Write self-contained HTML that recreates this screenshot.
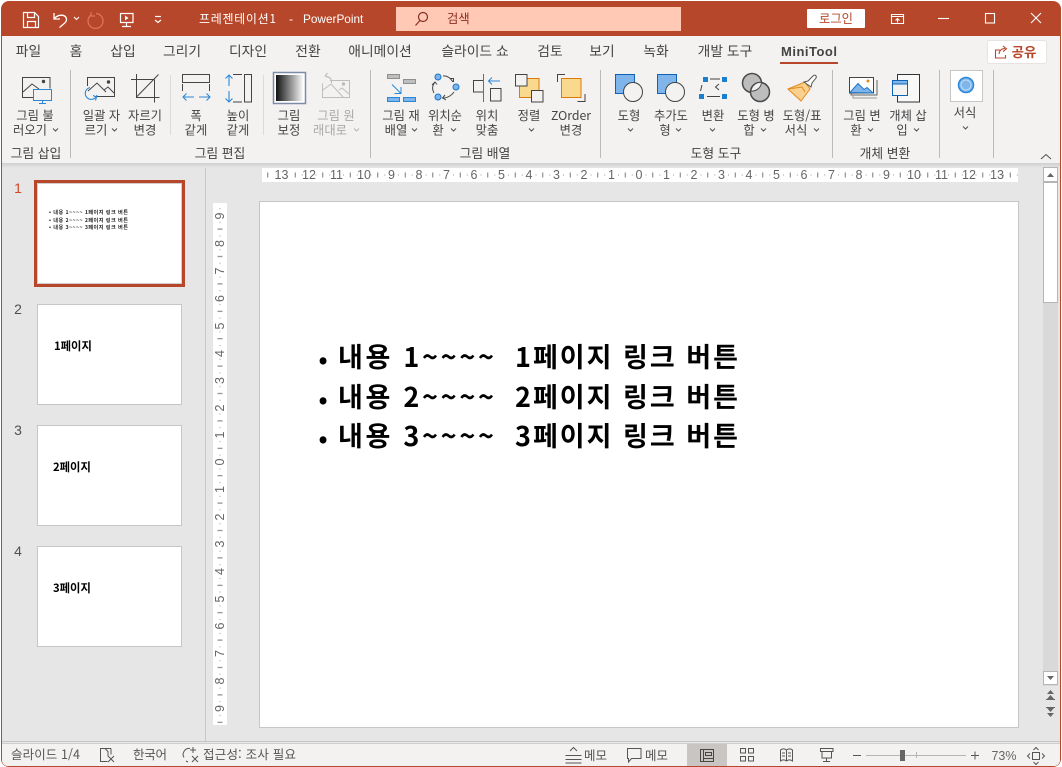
<!DOCTYPE html>
<html lang="ko"><head><meta charset="utf-8"><title>PowerPoint</title>
<style>
html,body{margin:0;padding:0;background:#fff;width:1062px;height:767px;overflow:hidden}
svg{display:block}
text{font-family:"Liberation Sans","Noto Sans CJK KR",sans-serif;font-size:12.3px;fill:#444}
.c{text-anchor:middle}
.k{font-family:"Noto Sans CJK KR","Liberation Sans",sans-serif}
.k text{font-family:"Noto Sans CJK KR","Liberation Sans",sans-serif}
.g{fill:#a8a8a8}
.w{fill:#fff}
.tab{font-size:13.8px;text-anchor:middle;fill:#444}
.r{font-size:12.5px;fill:#666;text-anchor:middle}
.m{font-size:27px;font-weight:700;fill:#000}
.t{font-size:11.3px;font-weight:700;fill:#000}
.s{font-size:5.2px;font-weight:700;fill:#222}
.st{font-size:12.5px;fill:#555}
.gl{font-size:12.8px}
</style></head><body>
<svg width="1062" height="767" viewBox="0 0 1062 767" xmlns="http://www.w3.org/2000/svg">
<defs>
<linearGradient id="gr" x1="0" x2="1" y1="0" y2="0"><stop offset="0" stop-color="#111"/><stop offset="1" stop-color="#fafafa"/></linearGradient>
<linearGradient id="sh" x1="0" x2="0" y1="0" y2="1"><stop offset="0" stop-color="#cfcfcf"/><stop offset="1" stop-color="#e6e6e6"/></linearGradient>
<pattern id="hr" patternUnits="userSpaceOnUse" x="639" y="168" width="27.5" height="14">
<rect x="13.25" y="4.5" width="1" height="5" fill="#777"/><rect x="6.5" y="6.5" width="1" height="1" fill="#999"/><rect x="20.25" y="6.5" width="1" height="1" fill="#999"/>
</pattern>
<pattern id="vr" patternUnits="userSpaceOnUse" x="213" y="462" width="14" height="27.4">
<rect x="4.5" y="13.2" width="5" height="1" fill="#777"/><rect x="6.5" y="6.4" width="1" height="1" fill="#999"/><rect x="6.5" y="20" width="1" height="1" fill="#999"/>
</pattern>
</defs>

<!-- window -->
<rect x="1" y="1" width="1060" height="766" rx="8" fill="#B7472A"/>
<rect x="2" y="36" width="1058" height="730" rx="6" fill="#E6E6E6"/>
<rect x="2" y="36" width="1058" height="127" fill="#F3F2F1"/>
<rect x="2" y="163" width="1058" height="5" fill="url(#sh)"/>

<!-- quick access -->
<g fill="none" stroke="#fff" stroke-width="1.2">
<path d="M23.5 12.5h11l4 4v11h-15z"/><path d="M27.5 12.5v5h7v-5M27.5 27.5v-6h8v6"/>
<path d="M54 13v6h6M54.5 18.5c3-4 11-5 12 0.500 .5 3-3 5-7 8.500" stroke-width="1.3"/>
<path d="M74 17l2.500 2.500 2.500-2.500" stroke-width="1.100"/>
<path d="M96 13.500a7.500 7.500 0 1 1-5 1.500" stroke="#E0735A" stroke-width="1.300"/><path d="M91 12v4h4" stroke="#E0735A"/>
<path d="M120.500 13.500h12.500v9h-12.500zM126.500 22.500v4M122 26.500h9"/>
<path d="M155 16.500h6" /><path d="M155 20l3 2.500 3-2.500"/>
</g>
<path d="M125 15.500l3.500 2.500-3.500 2.500z" fill="#fff"/>
<text class="w k" x="199" y="23" textLength="77" style="font-size:12px">프레젠테이션1</text>
<text class="w" x="289" y="23">-</text>
<text class="w" x="303" y="23" style="font-size:11.800px">PowerPoint</text>

<!-- search -->
<rect x="396" y="7" width="285" height="24" fill="#FFC9B5"/>
<g fill="none" stroke="#8a2e1e" stroke-width="1.200"><circle cx="423" cy="17" r="4.500"/><path d="M420 20.500l-4.500 5"/></g>
<text class="k" x="447" y="23" style="fill:#8a2e1e">검색</text>

<!-- login / controls -->
<rect x="807" y="9" width="58" height="19" rx="1" fill="#fff"/>
<text class="c k" x="836" y="23" style="fill:#B7472A">로그인</text>
<g fill="none" stroke="#fff" stroke-width="1.100">
<path d="M891.500 14.500h12v9h-12zM891.500 16.500h12M897.500 22.500v-4M895.500 20.500l2-2 2 2"/>
<path d="M938 18.500h11"/><rect x="985.500" y="13.500" width="9" height="9.500"/><path d="M1031 13l10 10M1041 13l-10 10"/>
</g>

<!-- tabs -->
<g class="k">
<text class="tab" x="28.500" y="56">파일</text><text class="tab" x="76" y="56">홈</text><text class="tab" x="123" y="56">삽입</text>
<text class="tab" x="182" y="56">그리기</text><text class="tab" x="248" y="56">디자인</text><text class="tab" x="308" y="56">전환</text>
<text class="tab" x="380" y="56">애니메이션</text><text class="tab" x="475" y="56">슬라이드 쇼</text><text class="tab" x="550" y="56">검토</text>
<text class="tab" x="602" y="56">보기</text><text class="tab" x="656" y="56">녹화</text><text class="tab" x="725" y="56">개발 도구</text>
</g>
<text class="tab" x="809" y="56" textLength="56" style="font-weight:700;fill:#444;font-size:13px">MiniTool</text>
<rect x="780" y="62" width="58" height="2" fill="#B7472A"/>
<rect x="987.500" y="40.500" width="59" height="23" rx="2" fill="#fff" stroke="#E6E4E2"/>
<g fill="none" stroke="#B7472A" stroke-width="1.100"><path d="M1000 50h-4.500v8h10v-3"/><path d="M999 54c.5-4 3-5.500 6-5.500M1003 46l3.500 2.800-3.500 2.800"/></g>
<text class="c k" x="1024" y="57" style="font-weight:700;fill:#B7472A;font-size:13.500px">공유</text>

<!-- ribbon separators -->
<g fill="#BDBBB9">
<rect x="70" y="70" width="1" height="88"/><rect x="370" y="70" width="1" height="88"/><rect x="600" y="70" width="1" height="88"/>
<rect x="832" y="70" width="1" height="88"/><rect x="939" y="70" width="1" height="88"/><rect x="993" y="70" width="1" height="88"/>
</g>
<g fill="#DDDBD9"><rect x="170" y="75" width="1" height="60"/><rect x="263" y="75" width="1" height="60"/></g>

<!-- ribbon icons: group 1 -->
<g fill="none" stroke="#444" stroke-width="1">
<path d="M33 97.500h-10.500v-20h27.500v11"/><path d="M23 92l9-8 7 5"/><circle cx="43.500" cy="81.500" r="1.200" fill="#444"/>
</g>
<g fill="none" stroke="#2B88D8" stroke-width="1"><rect x="33.500" y="89.500" width="18" height="11"/><path d="M42.500 100.500v3M39 103.500h7"/></g>
<g fill="none" stroke="#444" stroke-width="1">
<path d="M87.500 86v-8.500h27v19h-20"/><path d="M88 91l9-8 9 9M104 90l4-3 6 6"/><circle cx="108.500" cy="82" r="1.200" fill="#444"/>
<path d="M131 79.500h23.500M136.500 74v23.500h23M154.500 79.500v23M136.500 97l22-22.500"/>
<rect x="182.500" y="74.500" width="27" height="8"/><path d="M182.500 84v7M209.500 84v7"/>
<rect x="244.500" y="74.500" width="7" height="27.500"/><path d="M233 74.500h9M233 102h9"/>
</g>
<g fill="none" stroke="#2B88D8" stroke-width="1.100">
<path d="M90 87.500a6 6 0 1 0 7 7.500"/><path d="M93 100.500l3.500 1.500-1 3.500" transform="translate(0 -5)"/>
<path d="M183 97h11M186.500 93.500l-3.500 3.500 3.500 3.500M199 97h11M206.500 93.500l3.500 3.500-3.500 3.500"/>
<path d="M229 75v11M225.500 78.500l3.500-3.500 3.500 3.500M229 91v11M225.500 98.500l3.500 3.500 3.500-3.500"/>
</g>
<!-- picture correction -->
<rect x="273.500" y="72.500" width="32" height="31" fill="#fff" stroke="#7C8CA6" stroke-width="1.500"/>
<rect x="276" y="75" width="27" height="26" fill="url(#gr)"/>
<!-- reset picture -->
<g fill="none" stroke="#BDBDBD" stroke-width="1">
<path d="M330 80.500h19.500v17h-27v-14"/><path d="M323 90l8-6 12 13M339 90l3-2 7 6"/><circle cx="343.500" cy="84" r="1.200" fill="#BDBDBD"/>
<path d="M325 76l2.500-3M325 76l4 1.500M325.500 76c5 1 6 3 6 7" stroke-width="1.100"/>
</g>
<!-- arrange group -->
<rect x="387.500" y="74.500" width="12" height="4" fill="#BEBEBE" stroke="#8f8f8f"/>
<rect x="403.500" y="79.500" width="12" height="4" fill="#BEBEBE" stroke="#8f8f8f"/>
<g fill="#7FB5EA" stroke="#2B88D8"><rect x="387.500" y="97.500" width="12" height="4"/><rect x="403.500" y="97.500" width="12" height="4"/></g>
<path d="M392 84.500l9 9M394.500 93.500h6.500v-6.500" fill="none" stroke="#2B88D8" stroke-width="1"/>
<g fill="#7FB5EA" stroke="#1B74C8"><circle cx="438" cy="77" r="3"/><circle cx="456" cy="87" r="3"/><circle cx="438" cy="97" r="3"/></g>
<g fill="none" stroke="#444" stroke-width="1">
<path d="M443 76c4-.5 7 1.500 10 6M450 78.500h3.500v3.500"/><path d="M454 92c-2 3-6 6-11 6M445 95l-2.500 3 3.500 2"/><path d="M434 93c-2-4-2-7 1-11M432 85l3-3 2 2.500"/>
<path d="M483 80.500h-9.500v11.500h9.500"/><rect x="490.500" y="88.500" width="10.500" height="12.500"/>
</g>
<rect x="483" y="74" width="1" height="28" fill="#E03A3A"/>
<path d="M500 81h-11.500M492 77.500l-3.500 3.500 3.500 3.500" fill="none" stroke="#2B88D8"/>
<rect x="519.500" y="78.500" width="19.500" height="19" fill="#F8D98D" stroke="#D97A0B"/>
<rect x="515.500" y="74.500" width="11.500" height="11.500" fill="#F3F2F1" stroke="#444"/>
<rect x="531.500" y="90.500" width="11.500" height="11.500" fill="#F3F2F1" stroke="#444"/>
<path d="M557.500 82v-7.500h7.500M585 94v7.500h-7.500" fill="none" stroke="#444"/>
<rect x="561.500" y="78.500" width="19.500" height="19" fill="#F8D98D" stroke="#D97A0B"/>
<!-- shape tools -->
<rect x="615.500" y="74.500" width="19" height="19" fill="#7FB5EA" stroke="#0E63B5"/>
<circle cx="633" cy="92" r="9.500" fill="#F3F2F1" stroke="#444"/>
<rect x="657.500" y="74.500" width="19" height="19" fill="#7FB5EA" stroke="#0E63B5"/>
<circle cx="675" cy="92" r="9.500" fill="#F3F2F1" stroke="#444"/>
<g fill="#1B7FD0"><rect x="703" y="77" width="5" height="5"/><rect x="722" y="77" width="5" height="5"/><rect x="699" y="94" width="5" height="5"/><rect x="722" y="94" width="5" height="5"/></g>
<path d="M710 79h10M702 85l-1.500 6M707 96.500h13M719 84l-3.500 3 3.500 3" fill="none" stroke="#444"/>
<circle cx="752" cy="83" r="9.500" fill="#BDBDBD" stroke="#4a4a4a" stroke-width="1.500"/>
<circle cx="760" cy="92" r="9.500" fill="#BDBDBD" stroke="#4a4a4a" stroke-width="1.500"/>
<path d="M751 91a9.500 9.500 0 0 1 10.500-8.500a9.500 9.500 0 0 1-10.500 8.500z" fill="#F3F2F1" stroke="#4a4a4a"/>
<path d="M788 89l17-7 5 7-9 12z" fill="#FAD08F" stroke="#E38A1B"/>
<path d="M788 89l14-2 3 5" fill="none" stroke="#E38A1B"/>
<path d="M804 82l4-1 5-5c2-2 4 0 3 2l-4 5-1 4z" fill="#fff" stroke="#555"/>
<!-- insert -->
<path d="M851 92v3h26v-15" fill="none" stroke="#666"/><path d="M853 95v3h24" fill="none" stroke="#999"/>
<rect x="849.500" y="77.500" width="24" height="15.500" fill="#fff" stroke="#444"/>
<path d="M850 92.500l8-9 6 6 3-2 6 5.500z" fill="#7FB5EA" stroke="#1B74C8"/>
<circle cx="868" cy="81" r="1.500" fill="#E38A1B"/>
<rect x="897.500" y="74.500" width="22" height="27.500" fill="#F8F8F8" stroke="#333"/>
<rect x="892.500" y="80.500" width="15" height="15" fill="#F3F2F1" stroke="#0E63B5"/>
<rect x="892.500" y="80.500" width="15" height="3.500" fill="#7FB5EA" stroke="#0E63B5"/>
<rect x="950.500" y="70.500" width="32" height="31" fill="#fff" stroke="#C8C6C4"/>
<circle cx="966" cy="85" r="7.500" fill="#7FB5EA" stroke="#2B88D8" stroke-width="1.500"/><circle cx="966" cy="85" r="5" fill="#7FB5EA" stroke="#BBDCF7"/>

<!-- ribbon labels -->
<g class="k">
<text class="c" x="35" y="120">그림 불</text><text class="c" x="30" y="134.500">러오기</text>
<text class="c" x="101.500" y="120">일괄 자</text><text class="c" x="96" y="134.500">르기</text>
<text class="c" x="145" y="120">자르기</text><text class="c" x="145" y="134.500">변경</text>
<text class="c" x="196" y="120">폭</text><text class="c" x="196" y="134.500">같게</text>
<text class="c" x="238" y="120">높이</text><text class="c" x="238" y="134.500">같게</text>
<text class="c" x="289" y="120">그림</text><text class="c" x="289" y="134.500">보정</text>
<text class="c g" x="336" y="120">그림 원</text><text class="c g" x="330" y="134.500">래대로</text>
<text class="c" x="401" y="120">그림 재</text><text class="c" x="396" y="134.500">배열</text>
<text class="c" x="445" y="120">위치순</text><text class="c" x="438" y="134.500">환</text>
<text class="c" x="487" y="120">위치</text><text class="c" x="487" y="134.500">맞춤</text>
<text class="c" x="529" y="120">정렬</text>
<text class="c" x="571" y="120">ZOrder</text><text class="c" x="571" y="134.500">변경</text>
<text class="c" x="629" y="120">도형</text>
<text class="c" x="671" y="120">추가도</text><text class="c" x="665" y="134.500">형</text>
<text class="c" x="713" y="120">변환</text>
<text class="c" x="756" y="120">도형 병</text><text class="c" x="749" y="134.500">합</text>
<text class="c" x="802" y="120">도형/표</text><text class="c" x="796" y="134.500">서식</text>
<text class="c" x="862" y="120">그림 변</text><text class="c" x="856" y="134.500">환</text>
<text class="c" x="908" y="120">개체 삽</text><text class="c" x="902" y="134.500">입</text>
<text class="c" x="965" y="117">서식</text>
<text class="c gl" x="36" y="158">그림 삽입</text><text class="c gl" x="220" y="158">그림 편집</text>
<text class="c gl" x="485" y="158">그림 배열</text><text class="c gl" x="716" y="158">도형 도구</text><text class="c gl" x="885" y="158">개체 변환</text>
</g>
<path d="M53 128.500l2.500 2.500 2.500-2.500M112 128.500l2.500 2.500 2.500-2.500M412 128.500l2.500 2.500 2.500-2.500M451 128.500l2.500 2.500 2.500-2.500M529 128.500l2.500 2.500 2.500-2.500M628 128.500l2.500 2.500 2.500-2.500M676 128.500l2.500 2.500 2.500-2.500M710 128.500l2.500 2.500 2.500-2.500M761 128.500l2.500 2.500 2.500-2.500M814 128.500l2.500 2.500 2.500-2.500M868 128.500l2.500 2.500 2.500-2.500M914 128.500l2.500 2.500 2.500-2.500M963 126.500l2.500 2.500 2.500-2.500" fill="none" stroke="#505050"/>
<path d="M354 128.500l2.500 2.500 2.500-2.500" fill="none" stroke="#b5b5b5"/>
<path d="M1041 159l5-4.500 5 4.500" fill="none" stroke="#505050"/>

<!-- panel divider -->
<rect x="205" y="168" width="1" height="573" fill="#C6C6C6"/>

<!-- thumbs -->
<text x="18" y="193" class="c" style="font-size:14px;fill:#D24726">1</text>
<text x="18" y="314" class="c" style="font-size:14px;fill:#505050">2</text>
<text x="18" y="435" class="c" style="font-size:14px;fill:#505050">3</text>
<text x="18" y="556" class="c" style="font-size:14px;fill:#505050">4</text>
<rect x="35.500" y="181.500" width="148" height="104" fill="#fff" stroke="#B7472A" stroke-width="3"/>
<rect x="37.500" y="183.500" width="144" height="100" fill="#fff" stroke="#D0CECE"/>
<g class="k">
<text class="s" x="49" y="214" textLength="79">• 내용 1~~~~  1페이지 링크 버튼</text>
<text class="s" x="49" y="222" textLength="79">• 내용 2~~~~  2페이지 링크 버튼</text>
<text class="s" x="49" y="229" textLength="79">• 내용 3~~~~  3페이지 링크 버튼</text>
</g>
<g fill="#fff" stroke="#C6C6C6"><rect x="37.500" y="304.500" width="144" height="100"/><rect x="37.500" y="425.500" width="144" height="100"/><rect x="37.500" y="546.500" width="144" height="100"/></g>
<text class="t k" x="54" y="350">1페이지</text><text class="t k" x="53" y="471">2페이지</text><text class="t k" x="53" y="592">3페이지</text>

<!-- rulers -->
<rect x="262" y="168" width="756" height="14" fill="#fff"/>
<rect x="262" y="168" width="756" height="14" fill="url(#hr)"/>
<rect x="213" y="203" width="14" height="522" fill="#fff"/>
<rect x="213" y="203" width="14" height="522" fill="url(#vr)"/>
<g>
<rect x="274" y="168" width="15" height="14" fill="#fff"/><text class="r" x="281.500" y="179">13</text>
<text class="r" x="309" y="179">12</text><text class="r" x="336.500" y="179">11</text><text class="r" x="364" y="179">10</text>
<text class="r" x="391.500" y="179">9</text><text class="r" x="419" y="179">8</text><text class="r" x="446.500" y="179">7</text><text class="r" x="474" y="179">6</text>
<text class="r" x="501.500" y="179">5</text><text class="r" x="529" y="179">4</text><text class="r" x="556.500" y="179">3</text><text class="r" x="584" y="179">2</text>
<text class="r" x="611.500" y="179">1</text><text class="r" x="639" y="179">0</text><text class="r" x="666.500" y="179">1</text><text class="r" x="694" y="179">2</text>
<text class="r" x="721.500" y="179">3</text><text class="r" x="749" y="179">4</text><text class="r" x="776.500" y="179">5</text><text class="r" x="804" y="179">6</text>
<text class="r" x="831.500" y="179">7</text><text class="r" x="859" y="179">8</text><text class="r" x="886.500" y="179">9</text><text class="r" x="914" y="179">10</text>
<text class="r" x="941.500" y="179">11</text><text class="r" x="969" y="179">12</text><text class="r" x="997" y="179">13</text>
</g>
<g>
<text class="r" x="224" y="216" transform="rotate(-90 224 216)">9</text><text class="r" x="224" y="243.500" transform="rotate(-90 224 243.500)">8</text>
<text class="r" x="224" y="271" transform="rotate(-90 224 271)">7</text><text class="r" x="224" y="298.500" transform="rotate(-90 224 298.500)">6</text>
<text class="r" x="224" y="326" transform="rotate(-90 224 326)">5</text><text class="r" x="224" y="353.500" transform="rotate(-90 224 353.500)">4</text>
<text class="r" x="224" y="380.500" transform="rotate(-90 224 380.500)">3</text><text class="r" x="224" y="408" transform="rotate(-90 224 408)">2</text>
<text class="r" x="224" y="435" transform="rotate(-90 224 435)">1</text><text class="r" x="224" y="462" transform="rotate(-90 224 462)">0</text>
<text class="r" x="224" y="489.500" transform="rotate(-90 224 489.500)">1</text><text class="r" x="224" y="517" transform="rotate(-90 224 517)">2</text>
<text class="r" x="224" y="544" transform="rotate(-90 224 544)">3</text><text class="r" x="224" y="571.500" transform="rotate(-90 224 571.500)">4</text>
<text class="r" x="224" y="599" transform="rotate(-90 224 599)">5</text><text class="r" x="224" y="626" transform="rotate(-90 224 626)">6</text>
<text class="r" x="224" y="653.500" transform="rotate(-90 224 653.500)">7</text><text class="r" x="224" y="681" transform="rotate(-90 224 681)">8</text>
<text class="r" x="224" y="708.500" transform="rotate(-90 224 708.500)">9</text>
</g>

<!-- slide -->
<rect x="259.500" y="201.500" width="759" height="526" fill="#fff" stroke="#C6C6C6"/>
<g class="k">
<text class="m" x="318.500" y="368" style="font-size:24px">•</text><text class="m" x="338" y="367" textLength="156">내용 1~~~~</text><text class="m" x="515" y="367" textLength="223">1페이지 링크 버튼</text>
<text class="m" x="318.500" y="408" style="font-size:24px">•</text><text class="m" x="338" y="407" textLength="156">내용 2~~~~</text><text class="m" x="515" y="407" textLength="223">2페이지 링크 버튼</text>
<text class="m" x="318.500" y="447" style="font-size:24px">•</text><text class="m" x="338" y="446" textLength="156">내용 3~~~~</text><text class="m" x="515" y="446" textLength="223">3페이지 링크 버튼</text>
</g>

<!-- scrollbar -->
<rect x="1043" y="168" width="15" height="518" fill="#D9D9D9"/>
<rect x="1043.500" y="167.500" width="14" height="14" fill="#fff" stroke="#B5B5B5"/>
<path d="M1047 177l3.500-4 3.500 4z" fill="#666"/>
<rect x="1043.500" y="182.500" width="14" height="120" fill="#fff" stroke="#B5B5B5"/>
<rect x="1043.500" y="671.500" width="14" height="13" fill="#fff" stroke="#B5B5B5"/>
<path d="M1047 676l3.500 4 3.500-4z" fill="#666"/>
<path d="M1047 694l3.500-4 3.500 4zM1047 699l3.500-4 3.500 4zM1047 708l3.500 4 3.500-4zM1047 713l3.500 4 3.500-4z" fill="#666"/>
<rect x="1046" y="699" width="9" height="1" fill="#666"/><rect x="1046" y="707" width="9" height="1" fill="#666"/>

<!-- status bar -->
<rect x="2" y="741" width="1058" height="1" fill="#C6C6C6"/>
<path d="M2 744H1060V760a6 6 0 0 1-6 6H8a6 6 0 0 1-6-6z" fill="#F3F2F1"/>
<rect x="2" y="743" width="1058" height="1" fill="#CFCFCF"/>
<g class="k">
<text class="st" x="11" y="759" textLength="69">슬라이드 1/4</text><text class="st" x="133" y="759" textLength="34">한국어</text><text class="st" x="203" y="759" textLength="93">접근성: 조사 필요</text>
<text class="st" x="584" y="760" textLength="23">메모</text><text class="st" x="645" y="760" textLength="23">메모</text>
</g>
<g fill="none" stroke="#555" stroke-width="1">
<path d="M111 748.500h-10.500v13h7M111 748.500v6M105 748.500l3 3v5"/><path d="M108 756l6 6M114 756l-6 6"/>
<path d="M190 748.500a6 6 0 0 0-6 9M186 761l2 1M193 747v6M190 750h6M192 756l6 6M198 756l-6 6"/>
<path d="M565.500 755.500h16M565.500 759.500h16M565.500 763h16M570 751l3.500-3.500 3.500 3.500"/>
<path d="M627.500 748.500h13.500v10h-9.500l-3 3.500v-3.500h-1z"/>
<rect x="700.500" y="749.500" width="13" height="12"/>
<path d="M703.500 749.500v12M705.500 752.500h6v3h-6zM703.500 758.500h10"/>
<path d="M740.500 748.500h5v4.500h-5zM748.500 748.500h5v4.500h-5zM740.500 756.500h5v4.500h-5zM748.500 756.500h5v4.500h-5z"/>
<path d="M786.500 750c-2-1.500-4-1.500-6 0v11c2-1.500 4-1.500 6 0 2-1.500 4-1.500 6 0v-11c-2-1.500-4-1.500-6 0zM786.500 750v11M782 753h3M782 756h3M788 753h3M788 756h3"/>
<path d="M820.500 748.500h12.500v3h-12.500zM822 751.500v6.500h9.500v-6.500M826.500 758v3M823 761.500h7"/>
<path d="M853 755.500h8M971 755.500h8M975 751.500v8"/>
<rect x="1032.500" y="752.500" width="7" height="7"/><path d="M1033.500 750l2.500-2.500 2.500 2.500M1033.500 762l2.500 2.500 2.500-2.500M1030 753.500l-2.500 2.500 2.500 2.500M1042 753.500l2.500 2.500-2.500 2.500" />
</g>
<rect x="687" y="744" width="40" height="22" fill="#D2D0CE" style="mix-blend-mode:multiply"/>
<rect x="866" y="755" width="100" height="1" fill="#B5B5B5"/><rect x="916" y="752" width="1" height="6" fill="#B5B5B5"/>
<rect x="900" y="750" width="5" height="11" fill="#666"/>
<text class="c" x="1004" y="760" style="font-size:12.500px;fill:#666">73%</text>
</svg>
</body></html>
